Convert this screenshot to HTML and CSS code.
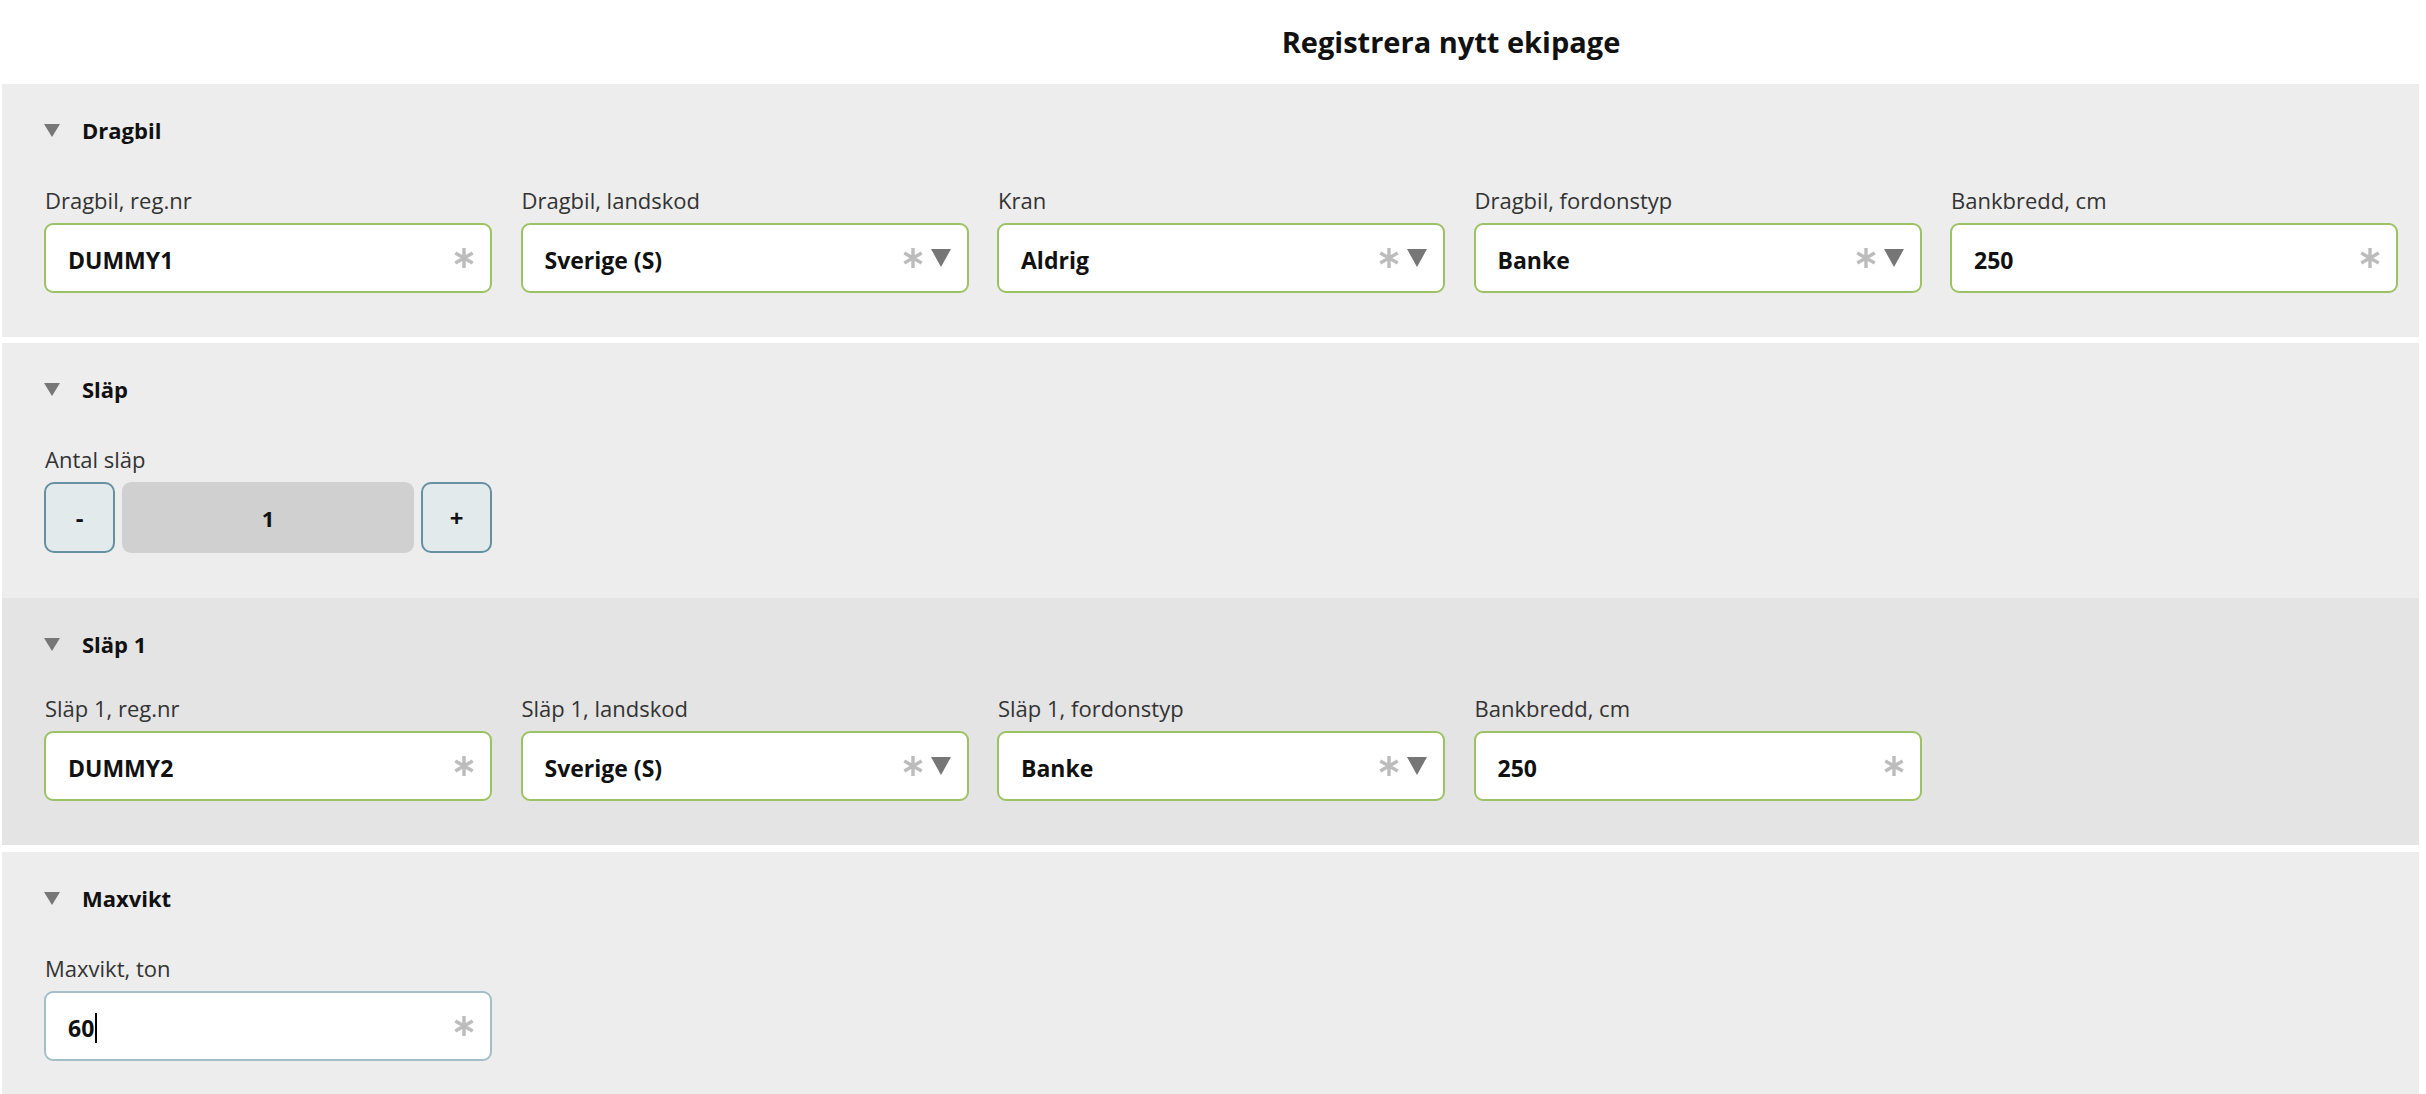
FILE: index.html
```html
<!DOCTYPE html>
<html lang="sv">
<head>
<meta charset="utf-8">
<title>Registrera nytt ekipage</title>
<link rel="stylesheet" href="styles.css">
</head>
<body>
<h1 class="page-title">Registrera nytt ekipage</h1>

<section class="panel">
  <div class="panel-head">
    <svg class="head-caret" viewBox="0 0 16 13"><polygon points="0,0 16,0 8,13"/></svg>
    <h2>Dragbil</h2>
  </div>
  <div class="fields">
    <div class="field">
      <label>Dragbil, reg.nr</label>
      <div class="input">
        <span class="value">DUMMY1</span>
        <svg class="req" viewBox="0 0 22 22"><path d="M11 1V21M2.3 6L19.7 16M2.3 16L19.7 6"/></svg>
      </div>
    </div>
    <div class="field">
      <label>Dragbil, landskod</label>
      <div class="input select">
        <span class="value">Sverige (S)</span>
        <svg class="req" viewBox="0 0 22 22"><path d="M11 1V21M2.3 6L19.7 16M2.3 16L19.7 6"/></svg>
        <svg class="arrow" viewBox="0 0 20 18"><polygon points="0,0 20,0 10,18"/></svg>
      </div>
    </div>
    <div class="field">
      <label>Kran</label>
      <div class="input select">
        <span class="value">Aldrig</span>
        <svg class="req" viewBox="0 0 22 22"><path d="M11 1V21M2.3 6L19.7 16M2.3 16L19.7 6"/></svg>
        <svg class="arrow" viewBox="0 0 20 18"><polygon points="0,0 20,0 10,18"/></svg>
      </div>
    </div>
    <div class="field">
      <label>Dragbil, fordonstyp</label>
      <div class="input select">
        <span class="value">Banke</span>
        <svg class="req" viewBox="0 0 22 22"><path d="M11 1V21M2.3 6L19.7 16M2.3 16L19.7 6"/></svg>
        <svg class="arrow" viewBox="0 0 20 18"><polygon points="0,0 20,0 10,18"/></svg>
      </div>
    </div>
    <div class="field">
      <label>Bankbredd, cm</label>
      <div class="input">
        <span class="value">250</span>
        <svg class="req" viewBox="0 0 22 22"><path d="M11 1V21M2.3 6L19.7 16M2.3 16L19.7 6"/></svg>
      </div>
    </div>
  </div>
</section>

<section class="panel panel-slap">
  <div class="panel-head">
    <svg class="head-caret" viewBox="0 0 16 13"><polygon points="0,0 16,0 8,13"/></svg>
    <h2>Släp</h2>
  </div>
  <div class="fields">
    <div class="field">
      <label>Antal släp</label>
      <div class="stepper">
        <button class="step-btn" type="button">-</button>
        <span class="step-value">1</span>
        <button class="step-btn" type="button">+</button>
      </div>
    </div>
  </div>
</section>

<section class="panel panel-sub">
  <div class="panel-head">
    <svg class="head-caret" viewBox="0 0 16 13"><polygon points="0,0 16,0 8,13"/></svg>
    <h2>Släp 1</h2>
  </div>
  <div class="fields">
    <div class="field">
      <label>Släp 1, reg.nr</label>
      <div class="input">
        <span class="value">DUMMY2</span>
        <svg class="req" viewBox="0 0 22 22"><path d="M11 1V21M2.3 6L19.7 16M2.3 16L19.7 6"/></svg>
      </div>
    </div>
    <div class="field">
      <label>Släp 1, landskod</label>
      <div class="input select">
        <span class="value">Sverige (S)</span>
        <svg class="req" viewBox="0 0 22 22"><path d="M11 1V21M2.3 6L19.7 16M2.3 16L19.7 6"/></svg>
        <svg class="arrow" viewBox="0 0 20 18"><polygon points="0,0 20,0 10,18"/></svg>
      </div>
    </div>
    <div class="field">
      <label>Släp 1, fordonstyp</label>
      <div class="input select">
        <span class="value">Banke</span>
        <svg class="req" viewBox="0 0 22 22"><path d="M11 1V21M2.3 6L19.7 16M2.3 16L19.7 6"/></svg>
        <svg class="arrow" viewBox="0 0 20 18"><polygon points="0,0 20,0 10,18"/></svg>
      </div>
    </div>
    <div class="field">
      <label>Bankbredd, cm</label>
      <div class="input">
        <span class="value">250</span>
        <svg class="req" viewBox="0 0 22 22"><path d="M11 1V21M2.3 6L19.7 16M2.3 16L19.7 6"/></svg>
      </div>
    </div>
  </div>
</section>

<section class="panel panel-last">
  <div class="panel-head">
    <svg class="head-caret" viewBox="0 0 16 13"><polygon points="0,0 16,0 8,13"/></svg>
    <h2>Maxvikt</h2>
  </div>
  <div class="fields">
    <div class="field">
      <label>Maxvikt, ton</label>
      <div class="input focused">
        <span class="value">60<span class="text-caret"></span></span>
        <svg class="req" viewBox="0 0 22 22"><path d="M11 1V21M2.3 6L19.7 16M2.3 16L19.7 6"/></svg>
      </div>
    </div>
  </div>
</section>
</body>
</html>
```

FILE: styles.css
```css
* {
  box-sizing: border-box;
}

html, body {
  margin: 0;
  padding: 0;
  background: #ffffff;
  font-family: "Open Sans", "Liberation Sans", sans-serif;
  color: #111;
  overflow: hidden;
}

.page-title {
  margin: 0;
  padding: 22px 0 0 476px;
  height: 84px;
  text-align: center;
  font-size: 29px;
  line-height: 40px;
  font-weight: 700;
  color: #111;
}

.panel {
  margin: 0 7px 6px 2px;
  padding: 31px 0 44px 42px;
  background: #ededed;
}

.panel-sub {
  background: #e4e4e4;
  margin-top: -6px;
  margin-bottom: 7px;
  padding-bottom: 44px;
}

.panel-sub .fields {
  margin-top: 34px;
}

.panel-slap {
  padding-bottom: 45px;
}

.panel-head {
  display: flex;
  align-items: center;
  height: 30px;
}

.head-caret {
  width: 16px;
  height: 13px;
  fill: #777;
  margin-left: 0;
  margin-right: 22px;
}

.panel-head h2 {
  margin: 0;
  font-size: 22px;
  line-height: 30px;
  font-weight: 700;
  color: #111;
}

.fields {
  margin-top: 40px;
  display: grid;
  grid-template-columns: repeat(5, 448px);
  column-gap: 28.5px;
}

.field label {
  display: block;
  font-size: 22px;
  line-height: 30px;
  color: #333;
  margin-left: 1px;
  margin-bottom: 8px;
}

.input {
  display: flex;
  align-items: center;
  height: 70px;
  padding: 0 15px 0 22px;
  background: #fff;
  border: 2px solid #9cc264;
  border-radius: 9px;
}

.input.focused {
  border-color: #a3bfc8;
}

.value {
  flex: 1;
  padding-top: 3px;
  font-size: 23px;
  font-weight: 700;
  color: #111;
  white-space: nowrap;
  display: flex;
  align-items: center;
}

.text-caret {
  display: inline-block;
  width: 0;
  height: 30px;
  border-left: 2px solid #000;
  margin-left: 1px;
}

.req {
  width: 22px;
  height: 22px;
  stroke: #bcbcbc;
  stroke-width: 3.4;
  fill: none;
  flex: none;
}

.arrow {
  width: 20px;
  height: 18px;
  fill: #767676;
  margin-left: 7px;
  flex: none;
}

.select {
  padding-right: 16px;
}

.stepper {
  display: flex;
  gap: 7px;
  height: 71px;
}

.step-btn {
  width: 71px;
  height: 71px;
  background: #e3eaec;
  border: 2px solid #6590a0;
  border-radius: 10px;
  font-family: "Open Sans", "Liberation Sans", sans-serif;
  font-size: 24px;
  font-weight: 700;
  color: #111;
  padding: 0;
}

.step-value {
  flex: 1;
  background: #d0d0d0;
  border-radius: 9px;
  display: flex;
  align-items: center;
  justify-content: center;
  font-size: 22px;
  font-weight: 700;
  color: #111;
}
```
